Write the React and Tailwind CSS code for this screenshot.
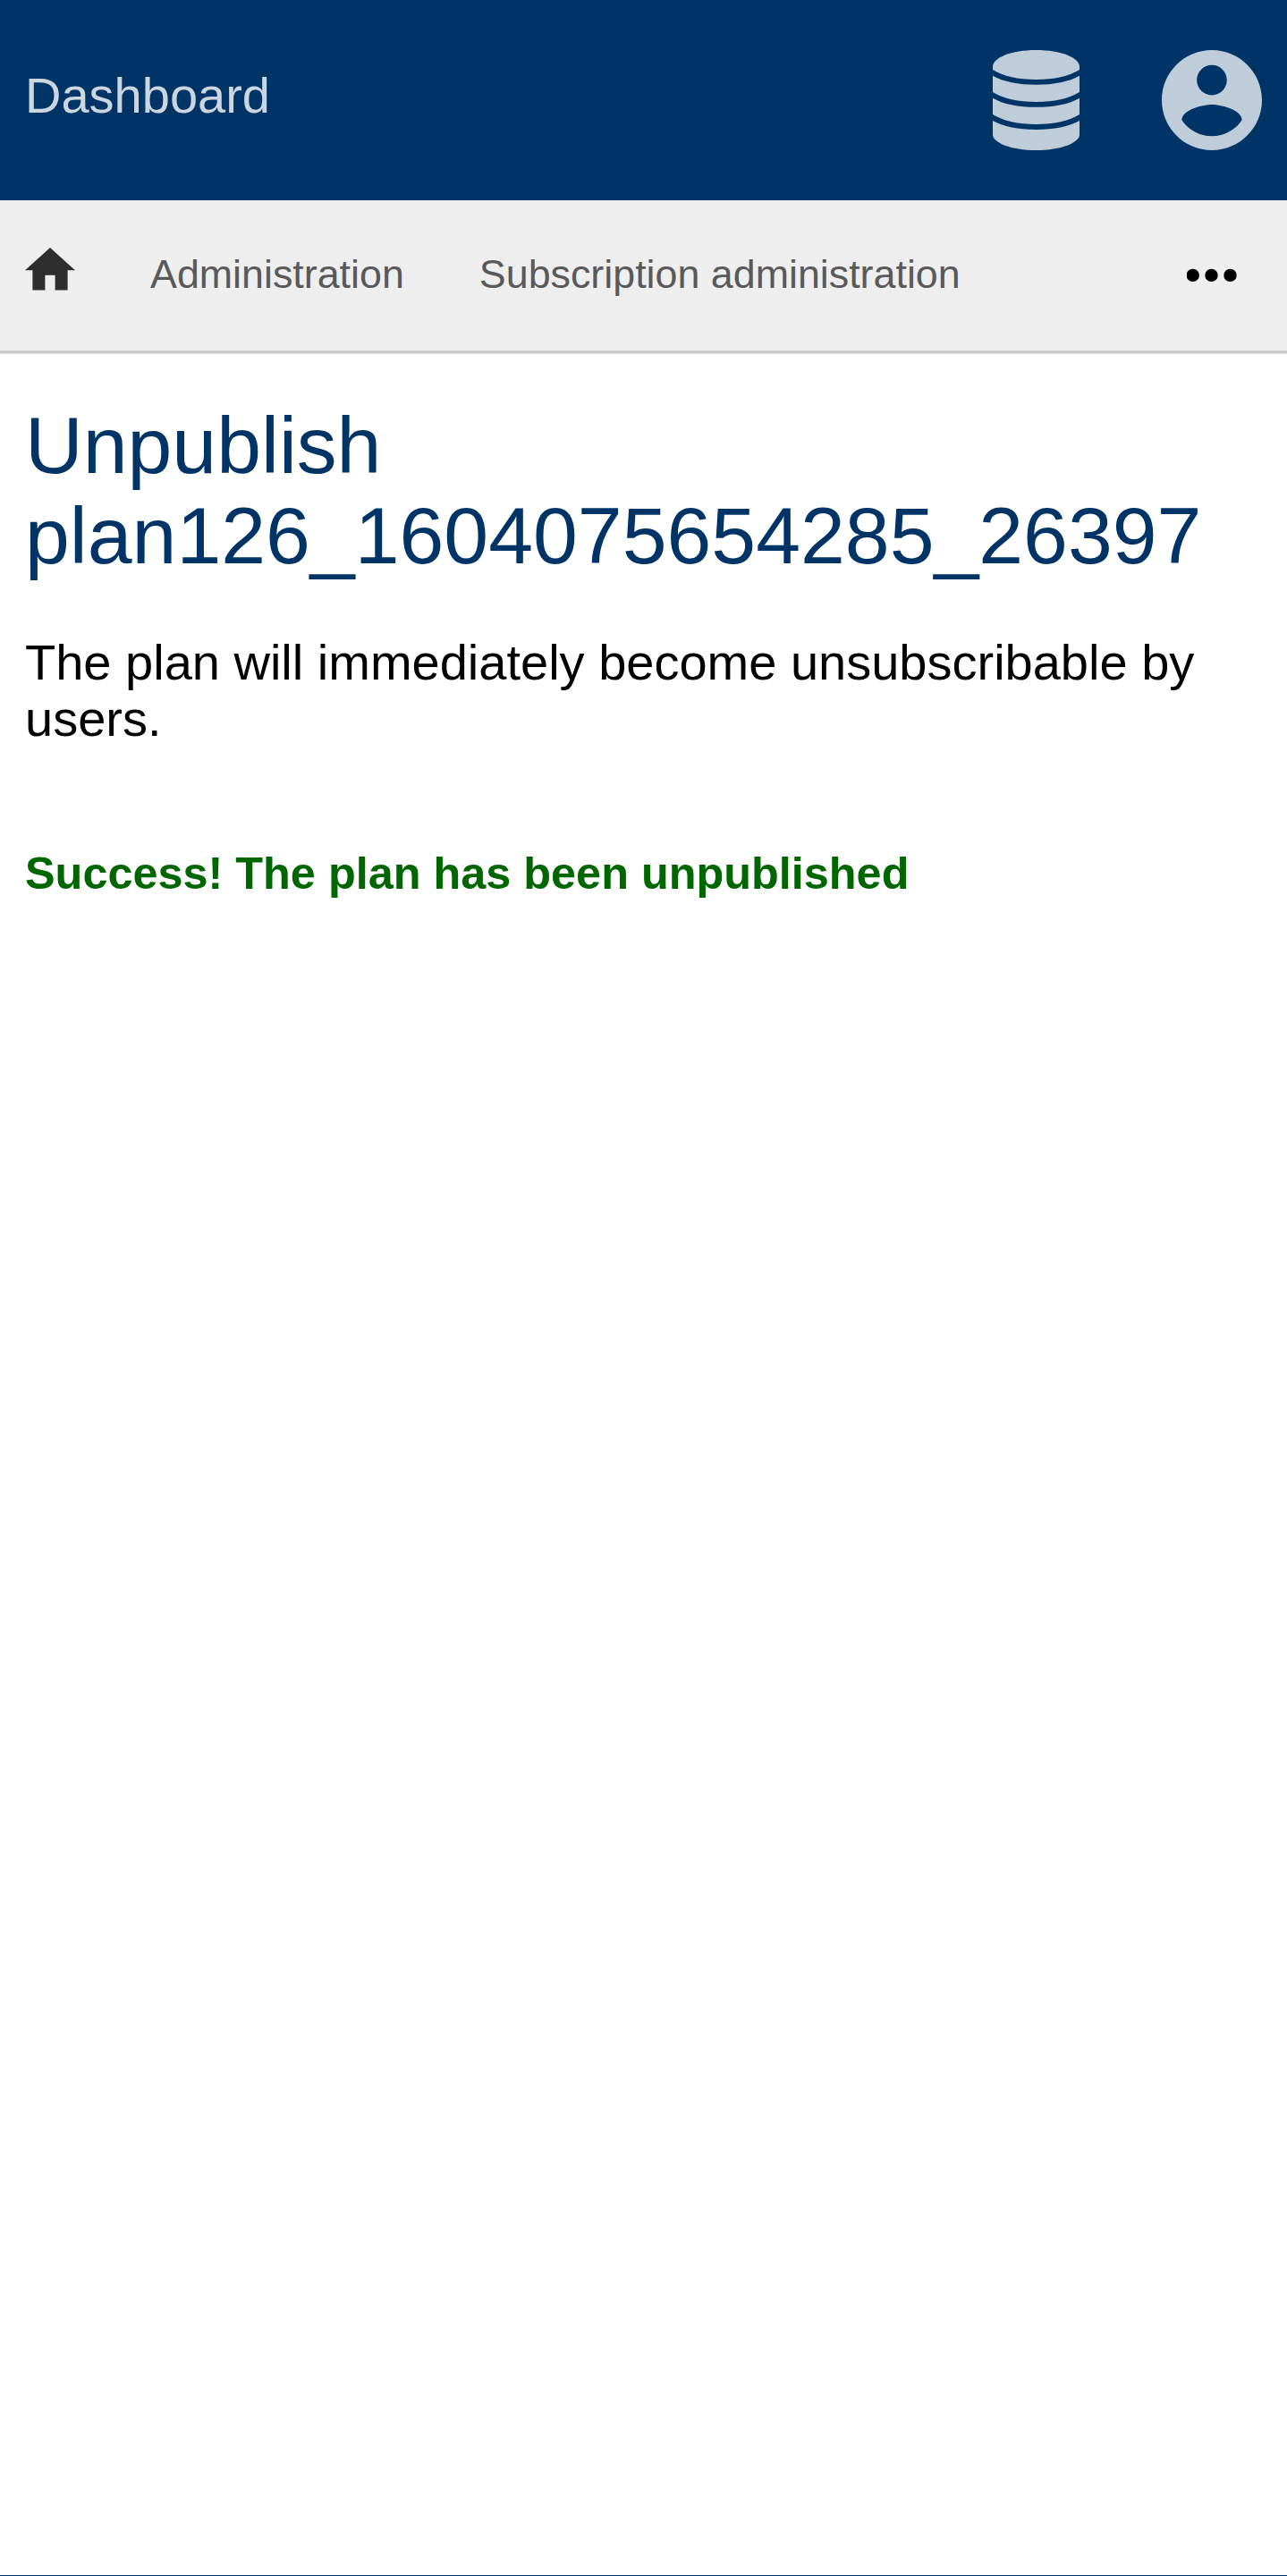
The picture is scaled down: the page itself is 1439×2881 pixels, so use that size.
function DatabaseIcon() {
  return (
    <svg className="h-[112px] w-[97px]" viewBox="0 0 291 336" fill="currentColor" aria-hidden="true">
      <path d="M0 56C0 26 62 0 145.500 0S291 26 291 56V66C256 88 205 99 145.500 99S35 88 0 66Z" />
      <path d="M0 86C35 106 86 116 145.500 116S256 106 291 86V141C256 163 205 174 145.500 174S35 163 0 141Z" />
      <path d="M0 161C35 181 86 191.500 145.500 191.500S256 181 291 161V216C256 238 205 249 145.500 249S35 238 0 216Z" />
      <path d="M0 237C35 257 86 267 145.500 267S256 257 291 237V284C291 310 230 336 145.500 336S0 310 0 284Z" />
    </svg>
  );
}

function AccountIcon() {
  return (
    <svg className="size-28" viewBox="2 2 20 20" fill="currentColor" aria-hidden="true">
      <path d="M12 2C6.480 2 2 6.480 2 12s4.480 10 10 10 10-4.480 10-10S17.520 2 12 2zm0 3c1.660 0 3 1.340 3 3s-1.340 3-3 3-3-1.340-3-3 1.340-3 3-3zm0 14.200c-2.500 0-4.710-1.280-6-3.220.030-1.990 4-3.080 6-3.080 1.990 0 5.970 1.090 6 3.080-1.290 1.940-3.500 3.220-6 3.220z" />
    </svg>
  );
}

function HomeIcon() {
  return (
    <svg className="h-[47.6px] w-14" viewBox="2 3 20 17" fill="currentColor" aria-hidden="true">
      <path d="M10 20v-6h4v6h5v-8h3L12 3 2 12h3v8z" />
    </svg>
  );
}

function MoreIcon() {
  return (
    <svg className="h-4 w-14" viewBox="0 0 56 16" fill="currentColor" aria-hidden="true">
      <circle cx="6.700" cy="7.900" r="7.200" />
      <circle cx="27.500" cy="7.900" r="7.200" />
      <circle cx="48.500" cy="7.900" r="7.200" />
    </svg>
  );
}

export default function App() {
  return (
    <div className="flex h-[2881px] flex-col border-b border-[#003366] bg-white font-['Liberation_Sans',Arial,sans-serif] text-black">
      <header className="flex h-56 shrink-0 items-center justify-between bg-[#003366] px-7">
        <a className="-mt-2.5 text-[56px] leading-[64px] text-[#ccd6e0]">Dashboard</a>
        <div className="flex items-center gap-[92px] text-[#bfccd9]">
          <DatabaseIcon />
          <AccountIcon />
        </div>
      </header>

      <nav className="flex h-[171px] shrink-0 items-start border-b-3 border-[#cccccc] bg-[#eeeeee] pr-14 pl-7 text-[44.8px] leading-[50px] text-[#595959] shadow-[0_1px_0_#e0e0e0]">
        <a className="mt-[53px] mr-21 text-[#2e2e2e]">
          <HomeIcon />
        </a>
        <a className="mt-[57px] mr-21">Administration</a>
        <a className="mt-[57px]">Subscription administration</a>
        <button className="mt-[76px] ml-auto text-black">
          <MoreIcon />
        </button>
      </nav>

      <main className="px-7 pt-[53px]">
        <h1 className="text-[89.6px] leading-[101px] text-[#003366]">
          Unpublish
          <br />
          plan126_1604075654285_26397
        </h1>
        <p className="mt-[59px] text-[56px] leading-[63px]">The plan will immediately become unsubscribable by users.</p>
        <p className="mt-[113px] text-[50.4px] leading-[58px] font-bold text-[#006600]">
          Success! The plan has been unpublished
        </p>
      </main>
    </div>
  );
}
